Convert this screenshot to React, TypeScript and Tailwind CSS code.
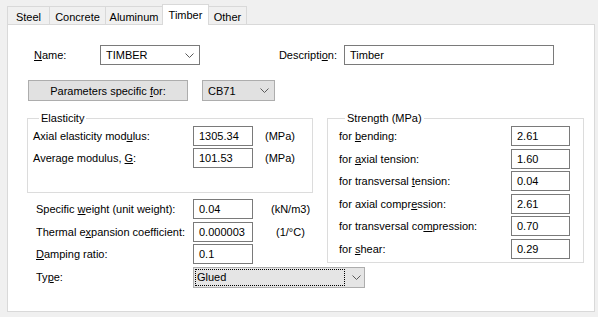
import React from 'react';

function Chevron() {
  return (
    <svg width="9" height="5" viewBox="0 0 9 5" className="shrink-0">
      <polyline points="0.5,0.5 4.5,4.5 8.5,0.5" fill="none" stroke="#5a5a5a" strokeWidth="1" />
    </svg>
  );
}

function Box({ value, w = 'w-[60px]' }: { value: string; w?: string }) {
  return (
    <div className={`${w} h-[20px] border border-[#7a7a7a] bg-white pl-[5px] flex items-center shrink-0`}>
      {value}
    </div>
  );
}

function Tab({ label, active, cls }: { label: string; active?: boolean; cls: string }) {
  return (
    <div
      className={`${cls} flex justify-center border-[#d9d9d9] ${
        active
          ? 'h-[21px] -mb-px relative z-10 bg-white border-l border-t border-r pt-[3px]'
          : 'h-[18px] bg-[#f0f0f0] border-t pt-[3px]'
      }`}
    >
      {label}
    </div>
  );
}

export default function App() {
  return (
    <div className="w-[598px] h-[317px] bg-[#f0f0f0] text-[11px] leading-[14px] text-black font-['Liberation_Sans',Arial,sans-serif]">
      {/* tabs */}
      <div className="flex items-end h-[24px] pl-[7px]">
        <Tab label="Steel" cls="w-[42px] border-l" />
        <Tab label="Concrete" cls="w-[56px] border-l" />
        <Tab label="Aluminum" cls="w-[57px] border-l" />
        <Tab label="Timber" active cls="w-[47px]" />
        <Tab label="Other" cls="w-[38px] border-r" />
      </div>

      <div className="ml-[7px] w-[588px] h-[288px] border border-[#d9d9d9] bg-white">
        {/* name / description */}
        <div className="flex items-center h-[20px] mt-[20px]">
          <span className="ml-[26px] w-[66px] shrink-0"><u>N</u>ame:</span>
          <div className="w-[100px] h-[20px] shrink-0 border border-[#7a7a7a] bg-white pl-[5px] pr-[5px] flex items-center justify-between">
            <span>TIMBER</span>
            <Chevron />
          </div>
          <span className="w-[144px] shrink-0 text-right pr-[7px]">Descripti<u>o</u>n:</span>
          <Box value="Timber" w="w-[210px]" />
        </div>

        {/* parameters */}
        <div className="flex items-center mt-[15px]">
          <button className="ml-[20px] w-[160px] h-[21px] shrink-0 border border-[#adadad] bg-[#e1e1e1] flex items-center justify-center">
            <span>Parameters specific <u>f</u>or:</span>
          </button>
          <div className="ml-[14px] w-[73px] h-[21px] shrink-0 border border-[#adadad] bg-[#e1e1e1] pl-[5px] pr-[5px] flex items-center justify-between">
            <span>CB71</span>
            <Chevron />
          </div>
        </div>

        <div className="flex items-start mt-[10px] pl-[19px]">
          {/* left column */}
          <div className="w-[286px] shrink-0">
            <fieldset className="border border-[#dcdcdc] pl-[5px] pb-[24px]">
              <legend className="ml-[6px] px-[2px] leading-[14px]">Elasticity</legend>
              <div className="flex flex-col gap-[2px] mt-[1px]">
                <div className="flex items-center h-[20px]">
                  <span className="w-[160px] shrink-0">Axial elasticity mod<u>u</u>lus:</span>
                  <Box value="1305.34" />
                  <span className="ml-[12px] shrink-0">(MPa)</span>
                </div>
                <div className="flex items-center h-[20px]">
                  <span className="w-[160px] shrink-0">Average modulus, <u>G</u>:</span>
                  <Box value="101.53" />
                  <span className="ml-[12px] shrink-0">(MPa)</span>
                </div>
              </div>
            </fieldset>

            <div className="flex flex-col gap-[2.6px] mt-[6px] pl-[9px]">
              <div className="flex items-center h-[20px]">
                <span className="w-[157px] shrink-0">Specific <u>w</u>eight (unit weight):</span>
                <Box value="0.04" />
                <span className="ml-[18px] shrink-0">(kN/m3)</span>
              </div>
              <div className="flex items-center h-[20px]">
                <span className="w-[157px] shrink-0">Thermal e<u>x</u>pansion coefficient:</span>
                <Box value="0.000003" />
                <span className="ml-[23px] shrink-0">(1/°C)</span>
              </div>
              <div className="flex items-center h-[20px]">
                <span className="w-[157px] shrink-0"><u>D</u>amping ratio:</span>
                <Box value="0.1" />
              </div>
              <div className="flex items-center h-[21px]">
                <span className="w-[157px] shrink-0">Ty<u>p</u>e:</span>
                <div className="w-[172px] h-[21px] shrink-0 border border-[#adadad] bg-[#e5e5e5] p-[1px] pr-[3px] flex items-center justify-between">
                  <span className="w-[150px] h-full border border-dotted border-black flex items-center pl-[1px]">Glued</span>
                  <Chevron />
                </div>
              </div>
            </div>
          </div>

          {/* strength */}
          <fieldset className="ml-[14px] w-[257px] shrink-0 border border-[#dcdcdc] pl-[11px] pb-[3px]">
            <legend className="ml-[6px] px-[2px] leading-[14px]">Strength (MPa)</legend>
            <div className="flex flex-col gap-[2.6px] mt-[1px]">
              {[
                [<>for <u>b</u>ending:</>, '2.61'],
                [<>for <u>a</u>xial tension:</>, '1.60'],
                [<>for transversal <u>t</u>ension:</>, '0.04'],
                [<>for axial compr<u>e</u>ssion:</>, '2.61'],
                [<>for transversal co<u>m</u>pression:</>, '0.70'],
                [<>for <u>s</u>hear:</>, '0.29'],
              ].map(([label, value], i) => (
                <div key={i} className="flex items-center h-[20px]">
                  <span className="w-[172px] shrink-0">{label}</span>
                  <Box value={value as string} w="w-[59px]" />
                </div>
              ))}
            </div>
          </fieldset>
        </div>
      </div>
    </div>
  );
}
